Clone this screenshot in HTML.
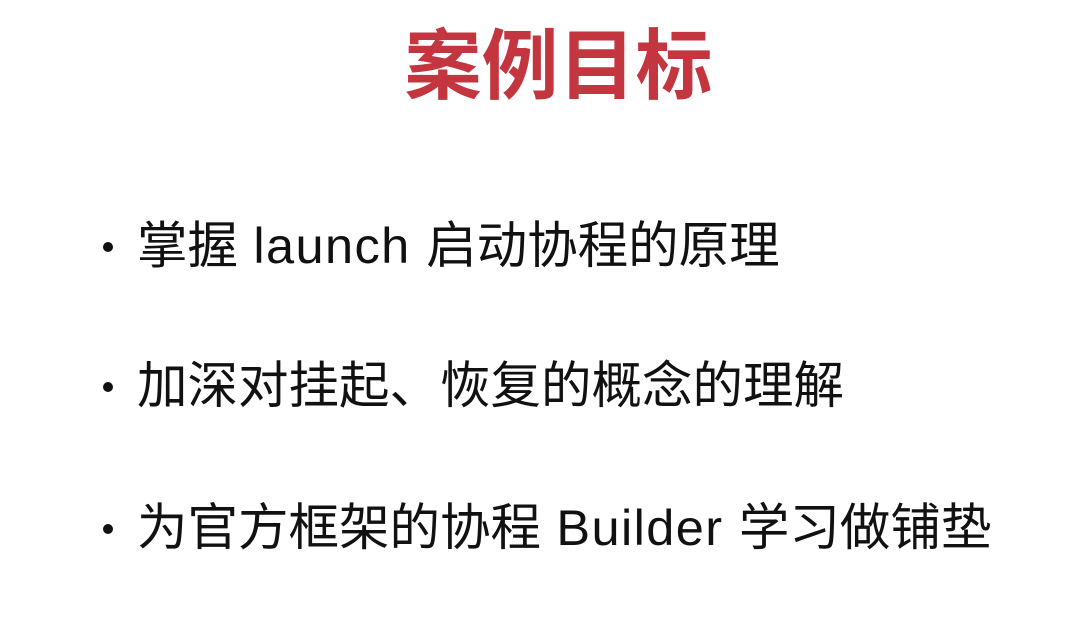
<!DOCTYPE html>
<html><head><meta charset="utf-8"><style>
html,body{margin:0;padding:0;background:#fff;width:1088px;height:626px;overflow:hidden;}
.t{position:absolute;left:0;width:1117px;text-align:center;top:20px;font:bold 77px/94px "Liberation Sans","Noto Sans CJK SC",sans-serif;color:#c3353f;}
.l{position:absolute;left:137px;font:50.5px/70px "Liberation Sans","Noto Sans CJK SC",sans-serif;color:#111;white-space:nowrap;}
.l span{letter-spacing:1.4px;}
.d{position:absolute;left:103px;width:10px;height:10px;border-radius:50%;background:#111;}
</style></head><body>
<div class="t">案例目标</div>
<div class="d" style="top:242px"></div><div class="l" style="top:211px">掌握<span> launch </span>启动协程的原理</div>
<div class="d" style="top:382px"></div><div class="l" style="top:351px">加深对挂起、恢复的概念的理解</div>
<div class="d" style="top:524px"></div><div class="l" style="top:493px">为官方框架的协程<span> Builder </span>学习做铺垫</div>
</body></html>
